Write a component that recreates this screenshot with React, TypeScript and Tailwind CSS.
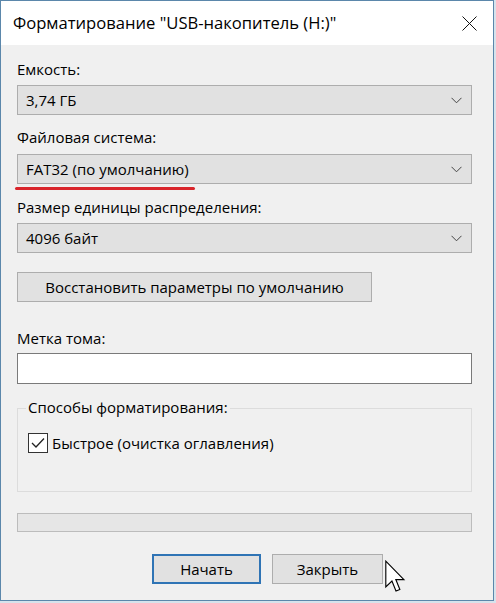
import React from "react";

const font = { fontFamily: '"Open Sans", "Noto Sans", "Liberation Sans", sans-serif' };

function Chevron() {
  return (
    <svg width="11" height="7" viewBox="0 0 11 7" className="shrink-0">
      <path d="M0.5 0.8 L5.5 5.8 L10.5 0.8" fill="none" stroke="#444" strokeWidth="1" />
    </svg>
  );
}

function Combo({ value }: { value: string }) {
  return (
    <div className="flex h-[30px] items-center justify-between border border-[#adadad] bg-[#e1e1e1] pl-[8px] pr-[9px] text-[15px] text-black">
      <span>{value}</span>
      <Chevron />
    </div>
  );
}

function Label({ children }: { children: React.ReactNode }) {
  return <div className="h-[20px] text-[15px] leading-[20px] text-black">{children}</div>;
}

export default function App() {
  return (
    <div className="h-[603px] w-[496px] bg-[#d7e3ec]" style={font}>
      <div className="relative flex h-[601px] w-[494px] flex-col border border-[#5b87ab] bg-[#f0f0f0]">
        {/* title bar */}
        <div className="flex h-[44px] shrink-0 items-center justify-between bg-white pl-[12px] pr-[16px]">
          <span className="text-[16.6px] text-black">Форматирование "USB-накопитель (H:)"</span>
          <svg width="15" height="15" viewBox="0 0 15 15">
            <path d="M0.5 0.5 L14.5 14.5 M14.5 0.5 L0.5 14.5" stroke="#111" strokeWidth="1" />
          </svg>
        </div>

        {/* dialog body */}
        <div className="flex flex-col pl-[16px] pt-[14px]" style={{ width: 471 }}>
          <Label>Емкость:</Label>
          <div className="mt-[6px]">
            <Combo value="3,74 ГБ" />
          </div>

          <div className="mt-[12px]">
            <Label>Файловая система:</Label>
          </div>
          <div className="relative mt-[7px]">
            <Combo value="FAT32 (по умолчанию)" />
            <div className="absolute left-[-2px] top-[33px] h-[3px] w-[180px] rounded-full bg-[#d9252b]" />
          </div>

          <div className="mt-[13px]">
            <Label>Размер единицы распределения:</Label>
          </div>
          <div className="mt-[6px]">
            <Combo value="4096 байт" />
          </div>

          <button className="mt-[19px] flex h-[30px] w-[355px] items-center justify-center border border-[#adadad] bg-[#e1e1e1] text-[15px] text-black">
            Восстановить параметры по умолчанию
          </button>

          <div className="mt-[26px]">
            <Label>Метка тома:</Label>
          </div>
          <div className="mt-[5px] h-[31px] border border-[#7a7a7a] bg-white" />

          {/* format options group */}
          <div className="relative mt-[24px] h-[84px] border border-[#dcdcdc]">
            <div className="absolute left-[8px] top-[-12px] bg-[#f0f0f0] px-[2px] text-[15px] leading-[20px] text-black">
              Способы форматирования:
            </div>
            <div className="absolute left-[10px] top-[23px] flex items-center gap-[4px]">
              <div className="flex h-[20px] w-[20px] items-center justify-center border border-[#333] bg-white">
                <svg width="14" height="12" viewBox="0 0 14 12">
                  <path d="M1 6 L5 10 L13 1.5" fill="none" stroke="#222" strokeWidth="1.3" />
                </svg>
              </div>
              <span className="text-[15px] text-black">Быстрое (очистка оглавления)</span>
            </div>
          </div>

          {/* progress bar */}
          <div className="mt-[21px] h-[19px] border border-[#bcbcbc] bg-[#e6e6e6]" />

          <div className="mt-[22px] flex gap-[11px] pl-[135px]">
            <button className="flex h-[30px] w-[109px] items-center justify-center border-2 border-[#2f74b5] bg-[#e1e1e1] text-[15px] text-black">
              Начать
            </button>
            <button className="flex h-[30px] w-[111px] items-center justify-center border border-[#adadad] bg-[#e1e1e1] text-[15px] text-black">
              Закрыть
            </button>
          </div>
        </div>

        {/* mouse pointer */}
        <svg
          className="absolute left-[384px] top-[559px]"
          width="21"
          height="33"
          viewBox="0 0 13 20"
        >
          <path
            d="M0.5 0.5 L0.5 16.5 L4.3 12.8 L6.8 19 L9.2 18 L6.7 11.9 L11.7 11.9 Z"
            fill="#fff"
            stroke="#000"
            strokeWidth="0.7"
            strokeLinejoin="miter"
          />
        </svg>
      </div>
    </div>
  );
}
